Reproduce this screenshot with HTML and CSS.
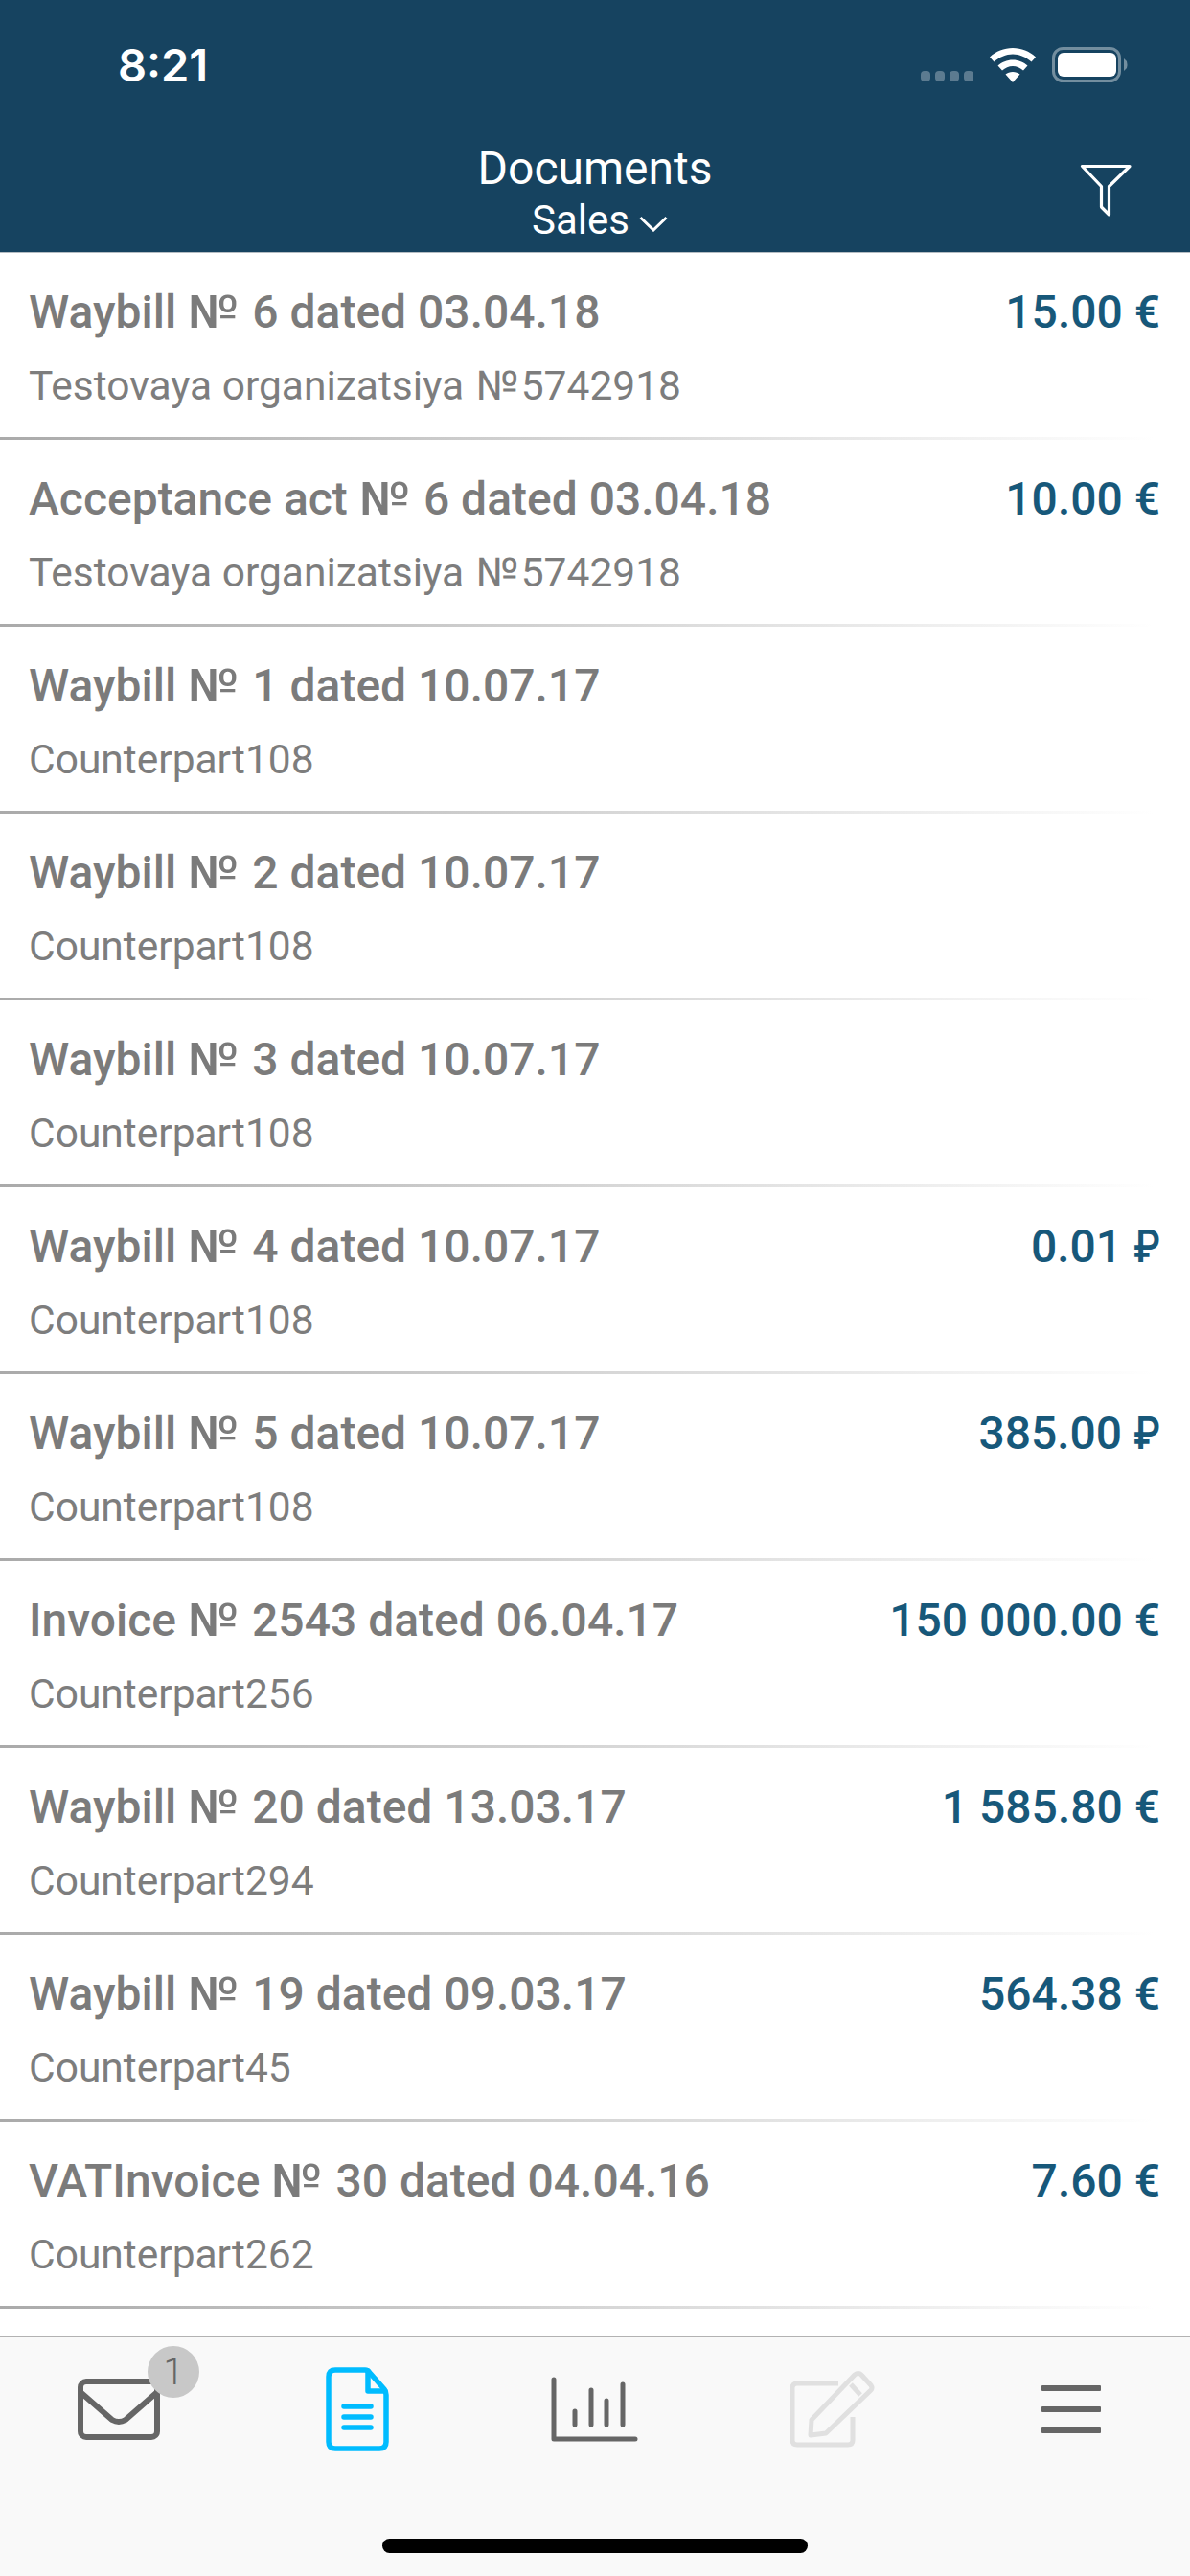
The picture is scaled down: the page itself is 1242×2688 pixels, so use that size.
FILE: index.html
```html
<!DOCTYPE html>
<html lang="en">
<head>
<meta charset="utf-8">
<title>Documents</title>
<link rel="stylesheet" href="styles.css">
</head>
<body>
<div class="app">
  <header class="header">
    <div class="status">
      <span class="time">8:21</span>
      <div class="status-icons">
        <svg class="signal" width="55" height="11" viewBox="0 0 55 11"><g fill="#ffffff" fill-opacity=".3"><rect x="0" y="0" width="10" height="11" rx="4"/><rect x="15" y="0" width="10" height="11" rx="4"/><rect x="30" y="0" width="10" height="11" rx="4"/><rect x="45" y="0" width="10" height="11" rx="4"/></g></svg>
        <svg class="wifi" width="48" height="36" viewBox="0 0 48 36"><path fill="#ffffff" d="M24 0C15 0 6.500 3.500 0 9.500L4.500 14.500C10 9.500 17 6.500 24 6.500S38 9.500 43.500 14.500L48 9.500C41.500 3.500 33 0 24 0ZM24 12.500C18 12.500 12.500 15 8.500 18.500L13 23.500C16 21 20 19 24 19S32 21 35 23.500L39.500 18.500C35.500 15 30 12.500 24 12.500ZM24 25C21 25 18.500 26 16.500 27.500L24 36L31.500 27.500C29.500 26 27 25 24 25Z"/></svg>
        <svg class="battery" width="80" height="37" viewBox="0 0 80 37"><rect x="1.500" y="1.500" width="69" height="34" rx="10" fill="none" stroke="#ffffff" stroke-opacity=".4" stroke-width="3"/><rect x="6" y="6" width="61" height="25" rx="6" fill="#ffffff"/><path d="M75 12L78 15Q79 18.500 78 22L75 25Z" fill="#ffffff" fill-opacity=".4"/></svg>
      </div>
    </div>
    <div class="nav">
      <div class="nav-title">
        <div class="nav-main">Documents</div>
        <div class="nav-sub">Sales<svg class="chevron" width="30" height="17" viewBox="0 0 30 17"><path d="M1.500 2L15 15L28.500 2" fill="none" stroke="#ffffff" stroke-width="3"/></svg></div>
      </div>
      <svg class="filter" width="56" height="57" viewBox="0 0 56 57"><path d="M2.500 3.500H52L30.500 24.500V54L22.500 46V24.500Z" fill="none" stroke="#ffffff" stroke-width="3.200" stroke-linejoin="round"/></svg>
    </div>
  </header>

  <main class="list">
    <div class="row"><div class="line"><span class="title">Waybill <span class="no">№</span> 6 dated 03.04.18</span><span class="amount">15.00 €</span></div><div class="sub">Testovaya organizatsiya <span class="no">№</span>5742918</div></div>
    <div class="row"><div class="line"><span class="title">Acceptance act <span class="no">№</span> 6 dated 03.04.18</span><span class="amount">10.00 €</span></div><div class="sub">Testovaya organizatsiya <span class="no">№</span>5742918</div></div>
    <div class="row"><div class="line"><span class="title">Waybill <span class="no">№</span> 1 dated 10.07.17</span></div><div class="sub">Counterpart108</div></div>
    <div class="row"><div class="line"><span class="title">Waybill <span class="no">№</span> 2 dated 10.07.17</span></div><div class="sub">Counterpart108</div></div>
    <div class="row"><div class="line"><span class="title">Waybill <span class="no">№</span> 3 dated 10.07.17</span></div><div class="sub">Counterpart108</div></div>
    <div class="row"><div class="line"><span class="title">Waybill <span class="no">№</span> 4 dated 10.07.17</span><span class="amount">0.01 <span class="rub">₽</span></span></div><div class="sub">Counterpart108</div></div>
    <div class="row"><div class="line"><span class="title">Waybill <span class="no">№</span> 5 dated 10.07.17</span><span class="amount">385.00 <span class="rub">₽</span></span></div><div class="sub">Counterpart108</div></div>
    <div class="row"><div class="line"><span class="title">Invoice <span class="no">№</span> 2543 dated 06.04.17</span><span class="amount">150 000.00 €</span></div><div class="sub">Counterpart256</div></div>
    <div class="row"><div class="line"><span class="title">Waybill <span class="no">№</span> 20 dated 13.03.17</span><span class="amount">1 585.80 €</span></div><div class="sub">Counterpart294</div></div>
    <div class="row"><div class="line"><span class="title">Waybill <span class="no">№</span> 19 dated 09.03.17</span><span class="amount">564.38 €</span></div><div class="sub">Counterpart45</div></div>
    <div class="row"><div class="line"><span class="title">VATInvoice <span class="no">№</span> 30 dated 04.04.16</span><span class="amount">7.60 €</span></div><div class="sub">Counterpart262</div></div>
  </main>

  <nav class="tabbar">
    <div class="tabs">
      <div class="tab">
        <svg width="100" height="100" viewBox="0 0 100 100"><g fill="none" stroke="#666666" stroke-width="6" stroke-linecap="round" stroke-linejoin="round"><rect x="10" y="19" width="80" height="58" rx="6"/><path d="M11 31L43 59Q50 63 57 59L89 31"/></g></svg>
        <span class="badge">1</span>
      </div>
      <div class="tab">
        <svg width="100" height="100" viewBox="0 0 100 100"><g fill="none" stroke="#00bcff" stroke-width="5.500" stroke-linecap="round" stroke-linejoin="round"><path d="M27 7H58Q61 7 63 10L78 27Q80 30 80 33V82Q80 89 73 89H27Q20 89 20 82V14Q20 7 27 7Z"/><path d="M61 8V29H79"/><path d="M36 45H64M36 56H64M36 67H64"/></g></svg>
      </div>
      <div class="tab">
        <svg width="100" height="100" viewBox="0 0 100 100"><g fill="none" stroke="#666666" stroke-width="5" stroke-linecap="round" stroke-linejoin="round"><path d="M7 17V79H92"/><path d="M29 50V64M46 28V64M62 39V64M79 22V64"/></g></svg>
      </div>
      <div class="tab">
        <svg width="100" height="100" viewBox="0 0 100 100"><g fill="none" stroke="#e0e0e0" stroke-width="5" stroke-linejoin="round"><path d="M56 21H13Q8 21 8 26V80Q8 85 13 85H66Q71 85 71 80V56"/><path d="M27 75L28 59L73 12Q77 9 80 12L90 23Q92 26 90 28L43 73Z"/><path d="M69 22L79 33"/></g></svg>
      </div>
      <div class="tab">
        <svg width="100" height="100" viewBox="0 0 100 100"><g fill="#666666"><rect x="19" y="23" width="62" height="6" rx="1"/><rect x="19" y="45" width="62" height="6" rx="1"/><rect x="19" y="67" width="62" height="6" rx="1"/></g></svg>
      </div>
    </div>
    <div class="home"></div>
  </nav>
</div>
</body>
</html>
```
FILE: styles.css
```css
* { box-sizing: border-box; }
html, body { margin: 0; padding: 0; }
body { font-family: Roboto, "Liberation Sans", sans-serif; background: #ffffff; }

.app {
  width: 1242px;
  height: 2688px;
  display: flex;
  flex-direction: column;
  overflow: hidden;
}

.header {
  flex: none;
  height: 264px;
  background: #164360;
  border-bottom: 1px solid #b4bcc2;
  color: #ffffff;
  display: flex;
  flex-direction: column;
}

.status {
  height: 136px;
  padding: 44px 64px 0 123px;
  display: flex;
  justify-content: space-between;
  align-items: flex-start;
}
.time {
  font-family: Inter, Roboto, sans-serif;
  font-weight: 600;
  font-size: 47px;
  line-height: 48px;
}
.status-icons {
  display: flex;
  align-items: flex-end;
  gap: 17px;
  padding-top: 5px;
}
.signal { margin-bottom: 1px; }

.nav {
  display: grid;
  grid-template-columns: 1fr auto 1fr;
  padding-right: 59px;
  padding-left: 59px;
}
.nav-title { grid-column: 2; text-align: center; }
.nav-main { font-size: 48px; line-height: 58px; margin-top: 11px; }
.nav-sub {
  font-size: 42px;
  line-height: 50px;
  display: flex;
  align-items: center;
  justify-content: center;
  gap: 10px;
  padding-left: 10px;
}
.chevron { margin-top: 6px; }
.filter { grid-column: 3; justify-self: end; margin-top: 34px; }

.list { flex: 1; min-height: 0; overflow: hidden; }
.row {
  height: 195px;
  padding: 32px 31px 0 30px;
  position: relative;
}
.row::after {
  content: "";
  position: absolute;
  left: 0;
  right: 0;
  bottom: 0;
  height: 3px;
  background: linear-gradient(to right, #aaaaaa, #ffffff 97%);
}
.line {
  display: flex;
  justify-content: space-between;
  align-items: baseline;
  line-height: 60px;
}
.title { font-size: 48px; font-weight: 500; color: #7b7b7b; }
.amount { font-size: 48px; font-weight: 500; color: #17587a; }
.rub {
  display: inline-block;
  margin-left: -5px;
  transform: scaleX(.84);
  transform-origin: right;
}
.no {
  display: inline-block;
  letter-spacing: .13em;
  transform: scaleX(1.09);
  transform-origin: left;
}
.sub { font-size: 42.5px; line-height: 50px; margin-top: 22px; color: #7d7d7d; }
.sub .no {
  letter-spacing: .08em;
  margin-left: 2px;
  transform: scaleX(1.02);
}

.tabbar {
  flex: none;
  height: 250px;
  background: #f9f9f9;
  border-top: 1px solid #b2b2b2;
  position: relative;
}
.tabs {
  display: grid;
  grid-template-columns: repeat(5, 1fr);
  padding-top: 27px;
}
.tab { position: relative; display: flex; justify-content: center; }
.badge {
  position: absolute;
  left: 154px;
  top: -18px;
  width: 54px;
  height: 54px;
  border-radius: 50%;
  background: #c8c8c8;
  color: #666666;
  font-size: 38px;
  font-weight: 300;
  line-height: 54px;
  text-align: center;
}
.home {
  width: 444px;
  height: 15px;
  border-radius: 8px;
  background: #000000;
  margin: 83px auto 0;
}
```
